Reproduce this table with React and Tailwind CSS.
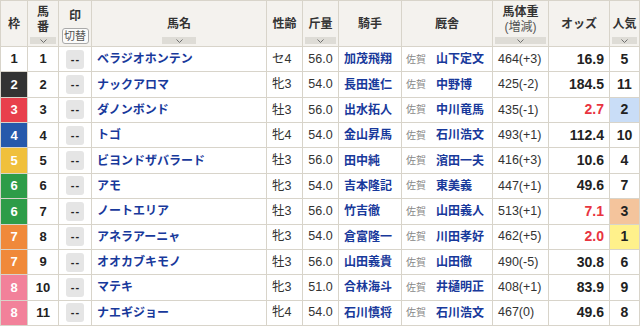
import React from 'react';

const rows = [
  [1, 1, 'ベラジオホンテン', 'セ4', '56.0', '加茂飛翔', '山下定文', '464(+3)', '16.9', 5],
  [2, 2, 'ナックアロマ', '牝3', '54.0', '長田進仁', '中野博', '425(-2)', '184.5', 11],
  [3, 3, 'ダノンボンド', '牡3', '56.0', '出水拓人', '中川竜馬', '435(-1)', '2.7', 2],
  [4, 4, 'トゴ', '牝4', '54.0', '金山昇馬', '石川浩文', '493(+1)', '112.4', 10],
  [5, 5, 'ビヨンドザバラード', '牡3', '56.0', '田中純', '濱田一夫', '416(+3)', '10.6', 4],
  [6, 6, 'アモ', '牝3', '54.0', '吉本隆記', '東美義', '447(+1)', '49.6', 7],
  [6, 7, 'ノートエリア', '牡3', '56.0', '竹吉徹', '山田義人', '513(+1)', '7.1', 3],
  [7, 8, 'アネラアーニャ', '牝3', '54.0', '倉富隆一', '川田孝好', '462(+5)', '2.0', 1],
  [7, 9, 'オオカブキモノ', '牡3', '56.0', '山田義貴', '山田徹', '490(-5)', '30.8', 6],
  [8, 10, 'マテキ', '牝3', '51.0', '合林海斗', '井樋明正', '408(+1)', '83.9', 9],
  [8, 11, 'ナエギジョー', '牝4', '54.0', '石川慎将', '石川浩文', '467(0)', '49.6', 8],
];

const frameColors = {
  1: 'bg-white text-[#222]',
  2: 'bg-[#333333] text-white',
  3: 'bg-[#e8404c] text-white',
  4: 'bg-[#2659ab] text-white',
  5: 'bg-[#f0c03c] text-white',
  6: 'bg-[#2e9c48] text-white',
  7: 'bg-[#f0893a] text-white',
  8: 'bg-[#f2819a] text-white',
};

const popColors = {
  1: 'bg-[#fff18b]',
  2: 'bg-[#c9ddf7]',
  3: 'bg-[#f4c49c]',
};

const Chevron = () => (
  <svg width="7" height="4" viewBox="0 0 7 4" fill="none">
    <polyline points="0.5,0.5 3.5,3.5 6.5,0.5" stroke="#6f6f6f" strokeWidth="1" />
  </svg>
);

const SortBar = ({ w = 'w-full' }) => (
  <div className={`${w} h-[7px] bg-[#dedcd6] flex items-center justify-center`}>
    <Chevron />
  </div>
);

const Head = ({ children }) => (
  <div className="bg-[#f4f2ee] flex flex-col items-center justify-center font-bold text-[12px] text-[#333]">
    {children}
  </div>
);

const SortHead = ({ children, bar }) => (
  <div className="bg-[#f4f2ee] flex flex-col items-center justify-end px-[2px] pb-[2px] font-bold text-[12px] text-[#333]">
    {children}
    {bar}
  </div>
);

const Cell = ({ className = '', children }) => (
  <div className={`bg-white flex items-center ${className}`}>{children}</div>
);

export default function App() {
  return (
    <div className="w-[640px] h-[326px] overflow-hidden bg-white font-['Liberation_Sans','Noto_Sans_CJK_JP',sans-serif]">
      <div className="grid grid-cols-[26px_30px_32px_174px_35px_35px_62px_90px_55px_60px_29px] grid-rows-[45px_repeat(11,24.36px)] gap-px bg-[#d8d4ca] border border-[#d8d4ca]">
        <Head>枠</Head>
        <SortHead bar={<div className="w-full mt-[2px]"><SortBar /></div>}>
          <span className="leading-[15px]">馬</span>
          <span className="leading-[15px]">番</span>
        </SortHead>
        <div className="bg-[#f4f2ee] flex flex-col items-center justify-end pb-[2px] font-bold text-[12px] text-[#333]">
          <span className="leading-4">印</span>
          <div className="mt-[4px] w-[27px] h-[16px] border border-[#a9a9a9] rounded-[3px] bg-[#fbfbfa] flex items-center justify-center text-[11px] font-normal text-[#555]">
            切替
          </div>
        </div>
        <SortHead bar={<div className="mt-[5px]"><SortBar w="w-[34px]" /></div>}>
          <span className="leading-4">馬名</span>
        </SortHead>
        <Head>性齢</Head>
        <SortHead bar={<div className="w-full mt-[5px]"><SortBar /></div>}>
          <span className="leading-4">斤量</span>
        </SortHead>
        <Head>騎手</Head>
        <Head>厩舎</Head>
        <SortHead bar={<div className="w-full mt-[2px]"><SortBar /></div>}>
          <span className="leading-[15px]">馬体重</span>
          <span className="leading-[15px] font-normal text-[#555]">(増減)</span>
        </SortHead>
        <Head>オッズ</Head>
        <SortHead bar={<div className="w-full mt-[5px]"><SortBar /></div>}>
          <span className="leading-4">人気</span>
        </SortHead>

        {rows.map(([frame, num, name, sex, kin, jockey, trainer, weight, odds, pop]) => {
          const red = parseFloat(odds) < 10;
          return (
            <React.Fragment key={num}>
              <div className={`${frameColors[frame]} flex items-center justify-center font-bold text-[13px]`}>{frame}</div>
              <Cell className="justify-center font-bold text-[13px] text-[#222]">{num}</Cell>
              <Cell className="justify-center">
                <div className="w-[18px] h-[19px] rounded-[3px] bg-[#e5e5e5] flex items-center justify-center font-bold text-[11px] text-[#222] leading-none tracking-[1px] pl-[1px]">
                  --
                </div>
              </Cell>
              <Cell className="pl-[5px] font-bold text-[12px] text-[#18399b]">{name}</Cell>
              <Cell className="pl-[5px] text-[12.5px] text-[#333]">{sex}</Cell>
              <Cell className="justify-center text-[12.5px] text-[#333]">{kin}</Cell>
              <Cell className="pl-[5px] font-bold text-[12px] text-[#18399b]">{jockey}</Cell>
              <Cell className="pl-[4px]">
                <span className="w-[30px] text-[10px] text-[#888]">佐賀</span>
                <span className="font-bold text-[12px] text-[#18399b]">{trainer}</span>
              </Cell>
              <Cell className="pl-[5px] text-[12.5px] text-[#333]">{weight}</Cell>
              <Cell className={`justify-end pr-[5px] font-bold text-[14px] ${red ? 'text-[#e8343f]' : 'text-[#222]'}`}>{odds}</Cell>
              <div className={`${popColors[pop] || 'bg-white'} flex items-center justify-center font-bold text-[14px] text-[#222]`}>{pop}</div>
            </React.Fragment>
          );
        })}
      </div>
    </div>
  );
}
